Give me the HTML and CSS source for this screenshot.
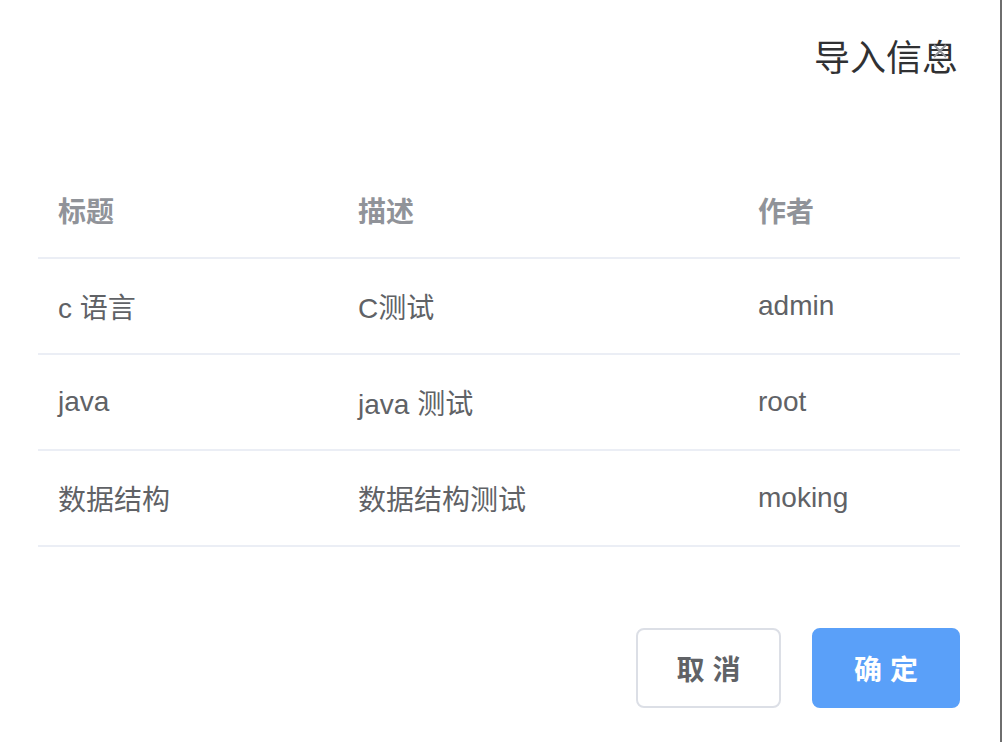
FILE: index.html
```html
<!DOCTYPE html>
<html lang="zh">
<head>
<meta charset="utf-8">
<link rel="stylesheet" href="styles.css">
</head>
<body>
<div class="dialog">
  <div class="dialog-header">
    <span class="title">导入信息</span>
    <svg class="close" width="14" height="14" viewBox="0 0 14 14"><path d="M1 1L13 13M13 1L1 13" stroke="#909399" stroke-width="2" fill="none"/></svg>
  </div>
  <div class="table">
    <div class="row head">
      <div class="cell c1">标题</div>
      <div class="cell c2">描述</div>
      <div class="cell c3">作者</div>
    </div>
    <div class="row">
      <div class="cell c1">c 语言</div>
      <div class="cell c2">C测试</div>
      <div class="cell c3">admin</div>
    </div>
    <div class="row">
      <div class="cell c1">java</div>
      <div class="cell c2">java 测试</div>
      <div class="cell c3">root</div>
    </div>
    <div class="row">
      <div class="cell c1">数据结构</div>
      <div class="cell c2">数据结构测试</div>
      <div class="cell c3">moking</div>
    </div>
  </div>
  <div class="footer">
    <button class="btn">取 消</button>
    <button class="btn primary">确 定</button>
  </div>
</div>
</body>
</html>
```

FILE: styles.css
```css
html, body {
  margin: 0;
  padding: 0;
  background: #ffffff;
}
body {
  font-family: "Liberation Sans", "Noto Sans CJK SC", sans-serif;
  width: 1002px;
  height: 742px;
  overflow: hidden;
}
.dialog {
  position: relative;
  width: 1000px;
  height: 742px;
  border-right: 2px solid #6e6e6e;
  background: #fff;
}
.dialog-header {
  display: flex;
  justify-content: flex-end;
  padding: 40px 42px 0 0;
  height: 38px;
}
.title {
  font-size: 36px;
  line-height: 38px;
  color: #303133;
}
.close {
  position: absolute;
  left: 933px;
  top: 44px;
  z-index: 2;
}
.table {
  margin: 85px 40px 0 38px;
}
.row {
  display: flex;
  height: 94px;
  align-items: center;
  border-bottom: 2px solid #ebeef5;
}
.cell {
  padding-left: 20px;
  box-sizing: border-box;
  font-size: 28px;
  color: #606266;
}
.head .cell {
  color: #909399;
  font-weight: bold;
}
.c1 { width: 300px; }
.c2 { width: 400px; }
.c3 { flex: 1; }
.footer {
  display: flex;
  justify-content: flex-end;
  gap: 31px;
  margin: 81px 40px 0 0;
}
.btn {
  height: 80px;
  width: 145px;
  border: 2px solid #dcdfe6;
  border-radius: 8px;
  background: #fff;
  color: #606266;
  font-family: "Liberation Sans", "Noto Sans CJK SC", sans-serif;
  font-size: 28px;
  font-weight: bold;
  padding: 0;
}
.btn.primary {
  width: 148px;
  background: #5aa0f9;
  border-color: #5aa0f9;
  color: #fff;
}
```
